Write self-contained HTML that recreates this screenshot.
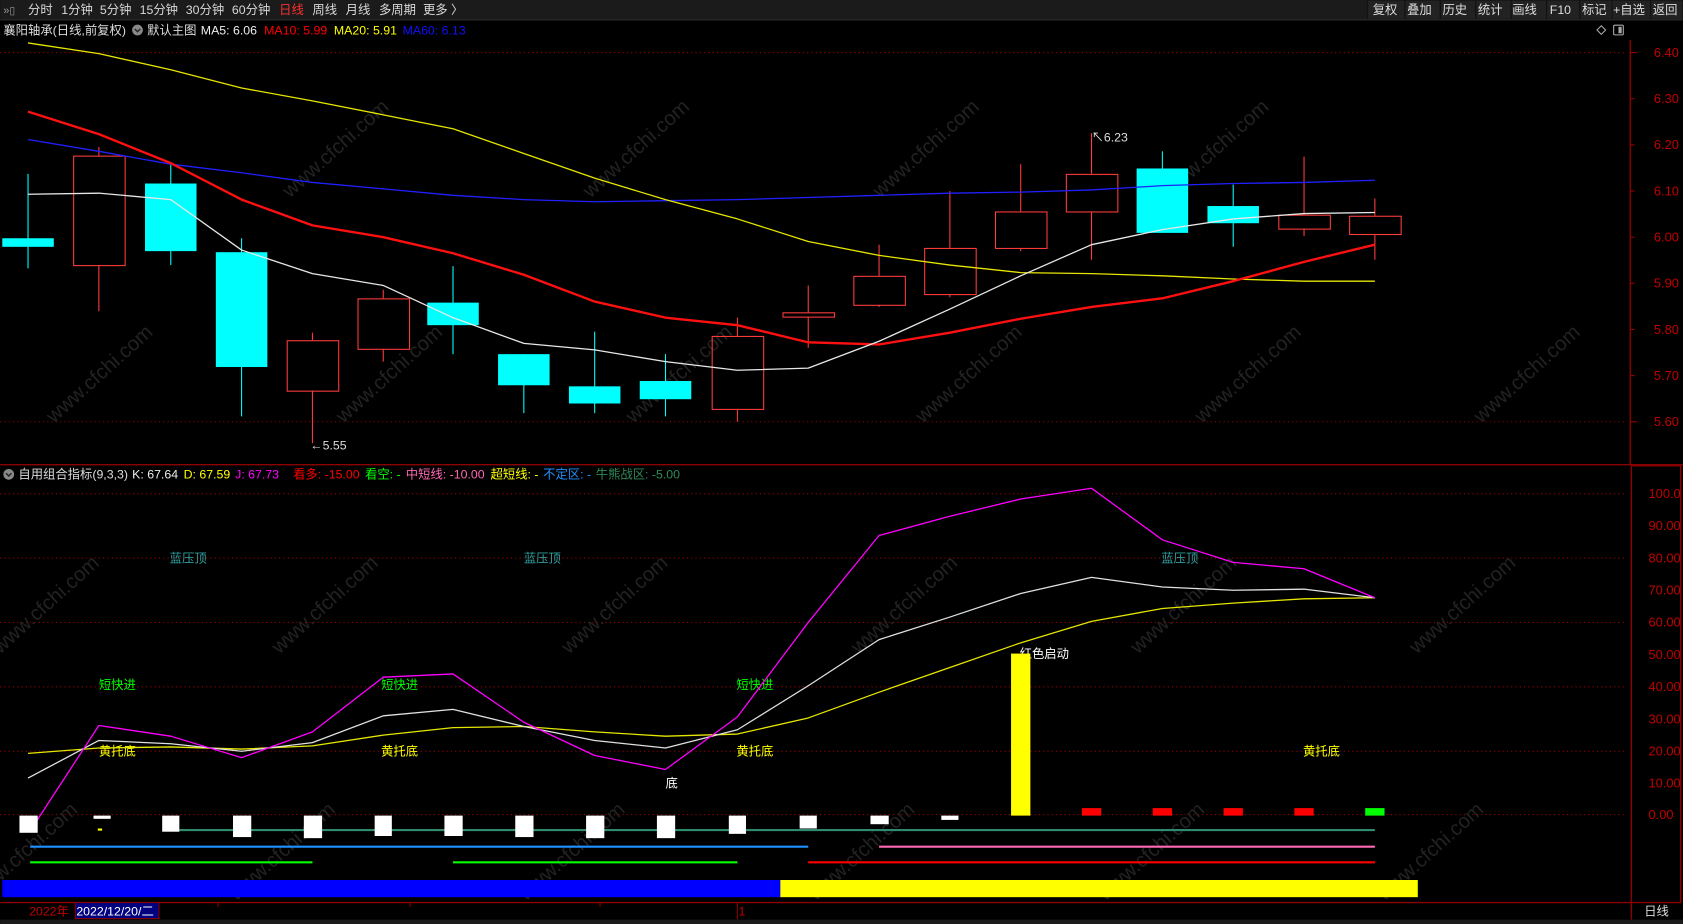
<!DOCTYPE html>
<html><head><meta charset="utf-8"><style>
html,body{margin:0;padding:0;background:#000;overflow:hidden}
svg{display:block;font-family:"Liberation Sans","Noto Sans CJK SC",sans-serif}
</style></head><body>
<svg width="1683" height="924" viewBox="0 0 1568 861" font-size="11.5" xmlns="http://www.w3.org/2000/svg">
<rect width="1568" height="861" fill="#000"/>
<!-- top bar -->
<rect x="0" y="0" width="1568" height="18" fill="#1b1b1b"/>
<g fill="#d8d8d8">
<text x="3" y="13" fill="#999" font-size="10">»▯</text>
<text x="26" y="13">分时</text><text x="57" y="13">1分钟</text><text x="93" y="13">5分钟</text>
<text x="130" y="13">15分钟</text><text x="173" y="13">30分钟</text><text x="216" y="13">60分钟</text>
<text x="260" y="13" fill="#ff3030">日线</text><text x="291" y="13">周线</text><text x="322" y="13">月线</text>
<text x="353" y="13">多周期</text><text x="394" y="13">更多 〉</text>
</g>
<g fill="#222" stroke="#111">
<rect x="1274" y="0" width="35" height="18"/><rect x="1309" y="0" width="33" height="18"/><rect x="1342" y="0" width="33" height="18"/>
<rect x="1375" y="0" width="33" height="18"/><rect x="1408" y="0" width="33" height="18"/><rect x="1441" y="0" width="31" height="18"/>
<rect x="1472" y="0" width="30" height="18"/><rect x="1502" y="0" width="36" height="18"/><rect x="1538" y="0" width="30" height="18"/>
</g>
<g fill="#ddd">
<text x="1279" y="13">复权</text><text x="1311" y="13">叠加</text><text x="1344" y="13">历史</text><text x="1377" y="13">统计</text>
<text x="1409" y="13">画线</text><text x="1444" y="13">F10</text><text x="1474" y="13">标记</text><text x="1503" y="13">+自选</text><text x="1540" y="13">返回</text>
</g>
<line x1="0" y1="18.5" x2="1568" y2="18.5" stroke="#333"/>
<!-- header line -->
<g font-size="11.5">
<text x="3" y="32" fill="#ddd">襄阳轴承(日线,前复权)</text>
<text x="137" y="32" fill="#ddd">默认主图</text>
<text x="187" y="32" fill="#eee">MA5: 6.06</text>
<text x="246" y="32" fill="#f00">MA10: 5.99</text>
<text x="311" y="32" fill="#ff0">MA20: 5.91</text>
<text x="375" y="32" fill="#1010ff">MA60: 6.13</text>
</g>
<circle cx="128" cy="28" r="5" fill="#888"/><path d="M125.5 27l2.5 2.5 2.5-2.5" stroke="#222" fill="none" stroke-width="1.3"/>
<path d="M1492 24l4 4-4 4-4-4z" fill="none" stroke="#aaa"/>
<rect x="1503.5" y="23.5" width="9" height="9" rx="1" fill="none" stroke="#aaa"/><rect x="1508" y="25" width="3" height="6" fill="#aaa"/>
<!-- axis frames -->
<g stroke="#8b0000" stroke-width="1.3" fill="none">
<line x1="1519" y1="37" x2="1519" y2="433"/>
<line x1="0" y1="433" x2="1568" y2="433"/>
<rect x="1520" y="434" width="46" height="407"/>
<line x1="0" y1="841" x2="1520" y2="841"/>
<line x1="1520" y1="841" x2="1520" y2="857"/>
</g>
<!-- price grid -->
<g stroke="#a00000" stroke-dasharray="1,3" stroke-width="1">
<line x1="0" y1="49" x2="1515" y2="49"/><line x1="0" y1="393" x2="1515" y2="393"/>
<line x1="0" y1="460" x2="1515" y2="460"/><line x1="0" y1="520" x2="1515" y2="520"/><line x1="0" y1="580" x2="1515" y2="580"/>
<line x1="0" y1="640" x2="1515" y2="640"/><line x1="0" y1="700" x2="1515" y2="700"/><line x1="0" y1="759" x2="1515" y2="759"/>
</g>
<g stroke="#a00000">
<line x1="1519" y1="49" x2="1525" y2="49"/><line x1="1519" y1="92" x2="1523" y2="92"/><line x1="1519" y1="135" x2="1523" y2="135"/><line x1="1519" y1="178" x2="1523" y2="178"/>
<line x1="1519" y1="221" x2="1523" y2="221"/><line x1="1519" y1="264" x2="1523" y2="264"/><line x1="1519" y1="307" x2="1523" y2="307"/><line x1="1519" y1="350" x2="1523" y2="350"/><line x1="1519" y1="393" x2="1525" y2="393"/>
</g>
<g fill="#c00000" font-size="12">
<text x="1541" y="53">6.40</text><text x="1541" y="96">6.30</text><text x="1541" y="139">6.20</text><text x="1541" y="182">6.10</text>
<text x="1541" y="225">6.00</text><text x="1541" y="268">5.90</text><text x="1541" y="311">5.80</text><text x="1541" y="354">5.70</text><text x="1541" y="397">5.60</text>
<text x="1536" y="464">100.0</text><text x="1536" y="494">90.00</text><text x="1536" y="524">80.00</text><text x="1536" y="554">70.00</text>
<text x="1536" y="584">60.00</text><text x="1536" y="614">50.00</text><text x="1536" y="644">40.00</text><text x="1536" y="674">30.00</text>
<text x="1536" y="704">20.00</text><text x="1536" y="734">10.00</text><text x="1536" y="763">0.00</text>
</g>
<!-- watermarks -->
<g fill="#222" font-size="19">
<g transform="translate(270,185) rotate(-42)"><text>www.cfchi.com</text></g>
<g transform="translate(550,185) rotate(-42)"><text>www.cfchi.com</text></g>
<g transform="translate(820,185) rotate(-42)"><text>www.cfchi.com</text></g>
<g transform="translate(1090,185) rotate(-42)"><text>www.cfchi.com</text></g>
<g transform="translate(50,395) rotate(-42)"><text>www.cfchi.com</text></g>
<g transform="translate(320,395) rotate(-42)"><text>www.cfchi.com</text></g>
<g transform="translate(590,395) rotate(-42)"><text>www.cfchi.com</text></g>
<g transform="translate(860,395) rotate(-42)"><text>www.cfchi.com</text></g>
<g transform="translate(1120,395) rotate(-42)"><text>www.cfchi.com</text></g>
<g transform="translate(1380,395) rotate(-42)"><text>www.cfchi.com</text></g>
<g transform="translate(0,610) rotate(-42)"><text>www.cfchi.com</text></g>
<g transform="translate(260,610) rotate(-42)"><text>www.cfchi.com</text></g>
<g transform="translate(530,610) rotate(-42)"><text>www.cfchi.com</text></g>
<g transform="translate(800,610) rotate(-42)"><text>www.cfchi.com</text></g>
<g transform="translate(1060,610) rotate(-42)"><text>www.cfchi.com</text></g>
<g transform="translate(1320,610) rotate(-42)"><text>www.cfchi.com</text></g>
<g transform="translate(-20,840) rotate(-42)"><text>www.cfchi.com</text></g>
<g transform="translate(220,840) rotate(-42)"><text>www.cfchi.com</text></g>
<g transform="translate(490,840) rotate(-42)"><text>www.cfchi.com</text></g>
<g transform="translate(760,840) rotate(-42)"><text>www.cfchi.com</text></g>
<g transform="translate(1030,840) rotate(-42)"><text>www.cfchi.com</text></g>
<g transform="translate(1290,840) rotate(-42)"><text>www.cfchi.com</text></g>
</g>
<!-- candles -->
<g stroke-width="1">
<g stroke="#00ffff">
<line x1="26" y1="162" x2="26" y2="250"/><line x1="159" y1="153" x2="159" y2="247"/><line x1="225" y1="222" x2="225" y2="388"/>
<line x1="422" y1="248" x2="422" y2="330"/><line x1="488" y1="330" x2="488" y2="385"/><line x1="554" y1="309" x2="554" y2="385"/>
<line x1="620" y1="330" x2="620" y2="388"/><line x1="1083" y1="141" x2="1083" y2="217"/><line x1="1149" y1="172" x2="1149" y2="230"/>
</g>
<g stroke="#ff3b3b">
<line x1="92" y1="137" x2="92" y2="145"/><line x1="92" y1="247" x2="92" y2="290"/>
<line x1="291" y1="310" x2="291" y2="317"/><line x1="291" y1="364" x2="291" y2="413"/>
<line x1="357" y1="270" x2="357" y2="278"/><line x1="357" y1="325" x2="357" y2="337"/>
<line x1="687" y1="296" x2="687" y2="313"/><line x1="687" y1="381" x2="687" y2="393"/>
<line x1="753" y1="266" x2="753" y2="291"/><line x1="753" y1="295" x2="753" y2="324"/>
<line x1="819" y1="228" x2="819" y2="257"/><line x1="819" y1="284" x2="819" y2="286"/>
<line x1="885" y1="178" x2="885" y2="231"/><line x1="885" y1="274" x2="885" y2="277"/>
<line x1="951" y1="153" x2="951" y2="197"/><line x1="951" y1="231" x2="951" y2="234"/>
<line x1="1017" y1="124" x2="1017" y2="162"/><line x1="1017" y1="197" x2="1017" y2="242"/>
<line x1="1215" y1="146" x2="1215" y2="200"/><line x1="1215" y1="213" x2="1215" y2="220"/>
<line x1="1281" y1="185" x2="1281" y2="201"/><line x1="1281" y1="218" x2="1281" y2="242"/>
</g>
<g fill="#00ffff">
<rect x="2" y="222" width="48" height="8"/><rect x="135" y="171" width="48" height="63"/><rect x="201" y="235" width="48" height="107"/>
<rect x="398" y="282" width="48" height="21"/><rect x="464" y="330" width="48" height="29"/><rect x="530" y="360" width="48" height="16"/>
<rect x="596" y="355" width="48" height="17"/><rect x="1059" y="157" width="48" height="60"/><rect x="1125" y="192" width="48" height="16"/>
</g>
<g fill="none" stroke="#ff3b3b">
<rect x="68.5" y="145.5" width="48" height="102"/><rect x="267.5" y="317.5" width="48" height="47"/><rect x="333.5" y="278.5" width="48" height="47"/>
<rect x="663.5" y="313.5" width="48" height="68"/><rect x="729.5" y="291.5" width="48" height="4"/><rect x="795.5" y="257.5" width="48" height="27"/>
<rect x="861.5" y="231.5" width="48" height="43"/><rect x="927.5" y="197.5" width="48" height="34"/><rect x="993.5" y="162.5" width="48" height="35"/>
<rect x="1191.5" y="200.5" width="48" height="13"/><rect x="1257.5" y="201.5" width="48" height="17"/>
</g>
</g>
<text x="1017" y="132" fill="#ddd">↖6.23</text>
<text x="289" y="419" fill="#ddd">←5.55</text>
<!-- MAs -->
<g fill="none" stroke-linejoin="round">
<polyline stroke="#2020ff" stroke-width="1.2" points="26,130 92,141 159,153 225,161 291,170 357,176 422,182 488,186 554,188 620,187 687,186 753,184 819,182 885,180 951,179 1017,177 1083,173 1149,171 1215,170 1281,168"/>
<polyline stroke="#e6e600" stroke-width="1.2" points="26,40 92,50 159,65 225,82 291,94 357,107 422,120 488,143 554,166 620,186 687,204 753,225 819,238 885,247 951,254 1017,255 1083,257 1149,260 1215,262 1281,262"/>
<polyline stroke="#ff1010" stroke-width="2.2" points="26,104 92,125 159,152 225,186 291,210 357,221 422,236 488,256 554,281 620,296 687,303 753,319 819,321 885,310 951,297 1017,286 1083,278 1149,262 1215,244 1281,228"/>
<polyline stroke="#e8e8e8" stroke-width="1.2" points="26,181 92,180 159,186 225,233 291,255 357,266 422,296 488,320 554,326 620,337 687,345 753,343 819,318 885,288 951,257 1017,228 1083,214 1149,204 1215,199 1281,198"/>
</g>
<!-- indicator header -->
<circle cx="8" cy="442" r="5" fill="#888"/><path d="M5.5 441l2.5 2.5 2.5-2.5" stroke="#222" fill="none" stroke-width="1.3"/>
<g font-size="11.5">
<text x="17" y="446" fill="#ddd">自用组合指标(9,3,3)</text>
<text x="123" y="446" fill="#eee">K: 67.64</text>
<text x="171" y="446" fill="#ff0">D: 67.59</text>
<text x="219" y="446" fill="#ff00ff">J: 67.73</text>
<text x="273" y="446" fill="#f00">看多: -15.00</text>
<text x="340" y="446" fill="#00ff00">看空: -</text>
<text x="378" y="446" fill="#ff69b4">中短线: -10.00</text>
<text x="457" y="446" fill="#ff0">超短线: -</text>
<text x="506" y="446" fill="#1e90ff">不定区: -</text>
<text x="555" y="446" fill="#2e8b57">牛熊战区: -5.00</text>
</g>
<!-- indicator labels -->
<g font-size="11.5">
<text x="158" y="524" fill="#2f9f9f">蓝压顶</text><text x="488" y="524" fill="#2f9f9f">蓝压顶</text><text x="1082" y="524" fill="#2f9f9f">蓝压顶</text>
<text x="92" y="642" fill="#00ff00">短快进</text><text x="355" y="642" fill="#00ff00">短快进</text><text x="686" y="642" fill="#00ff00">短快进</text>
<text x="92" y="704" fill="#ff0">黄托底</text><text x="355" y="704" fill="#ff0">黄托底</text><text x="686" y="704" fill="#ff0">黄托底</text><text x="1214" y="704" fill="#ff0">黄托底</text>
<text x="620" y="734" fill="#fff">底</text>
<text x="950" y="613" fill="#fff">红色启动</text>
</g>
<rect x="942" y="609" width="18" height="151" fill="#ff0"/>
<!-- KDJ -->
<g fill="none" stroke-width="1.2" stroke-linejoin="round">
<polyline stroke="#e6e600" points="26,702 92,697 159,696 225,698 291,695 357,685 422,678 488,677 554,682 620,686 687,684 753,669 819,645 885,622 951,599 1017,579 1083,567 1149,562 1215,558 1281,557"/>
<polyline stroke="#e0e0e0" points="26,725 92,690 159,693 225,700 291,692 357,667 422,661 488,677 554,690 620,697 687,680 753,639 819,596 885,575 951,553 1017,538 1083,547 1149,550 1215,549 1281,557"/>
<polyline stroke="#ff00ff" points="34,765 92,676 159,686 225,706 291,682 357,631 422,628 488,673 554,704 620,717 687,668 753,580 819,499 885,481 951,465 1017,455 1083,503 1149,524 1215,530 1281,557"/>
</g>
<!-- lines -->
<g stroke-width="2">
<line x1="167" y1="773.5" x2="1281" y2="773.5" stroke="#2e8b6f"/>
<line x1="28" y1="789" x2="753" y2="789" stroke="#1e90ff"/>
<line x1="819" y1="789" x2="1281" y2="789" stroke="#ff69b4"/>
<line x1="28" y1="803.5" x2="291" y2="803.5" stroke="#00ff00"/>
<line x1="422" y1="803.5" x2="687" y2="803.5" stroke="#00ff00"/>
<line x1="753" y1="803.5" x2="1281" y2="803.5" stroke="#ff0000"/>
</g>
<!-- squares -->
<g fill="#fff">
<rect x="18" y="760" width="17" height="16"/><rect x="87" y="760" width="16" height="3"/><rect x="151" y="760" width="16" height="15"/>
<rect x="217" y="760" width="17" height="20"/><rect x="283" y="760" width="17" height="21"/><rect x="349" y="760" width="16" height="19"/>
<rect x="414" y="760" width="17" height="19"/><rect x="480" y="760" width="17" height="20"/><rect x="546" y="760" width="17" height="21"/>
<rect x="612" y="760" width="17" height="21"/><rect x="679" y="760" width="16" height="17"/><rect x="745" y="760" width="16" height="12"/>
<rect x="811" y="760" width="17" height="8"/><rect x="877" y="760" width="16" height="4"/>
</g>
<rect x="91" y="772" width="4" height="2" fill="#ff0"/>
<g fill="#ff0000">
<rect x="1008" y="753" width="18" height="7"/><rect x="1074" y="753" width="18" height="7"/><rect x="1140" y="753" width="18" height="7"/><rect x="1206" y="753" width="18" height="7"/>
</g>
<rect x="1272" y="753" width="18" height="7" fill="#00ff00"/>
<!-- bars -->
<rect x="2" y="820" width="725" height="16" fill="#0000ff"/>
<rect x="727" y="820" width="594" height="16" fill="#ff0"/>
<!-- time axis -->
<g stroke="#8b0000"><line x1="203" y1="841" x2="203" y2="845"/><line x1="382" y1="841" x2="382" y2="845"/><line x1="559" y1="841" x2="559" y2="845"/><line x1="687" y1="841" x2="687" y2="857"/></g>
<text x="27" y="853" fill="#c00000">2022年</text>
<rect x="70" y="841" width="78" height="15" fill="#000080" stroke="#8b0000"/>
<text x="71" y="853" fill="#fff">2022/12/20/二</text>
<text x="688" y="853" fill="#c00000">1</text>
<text x="1532" y="853" fill="#ddd">日线</text>
<rect x="0" y="857" width="1568" height="4" fill="#1b1b1b"/>
</svg>
</body></html>
